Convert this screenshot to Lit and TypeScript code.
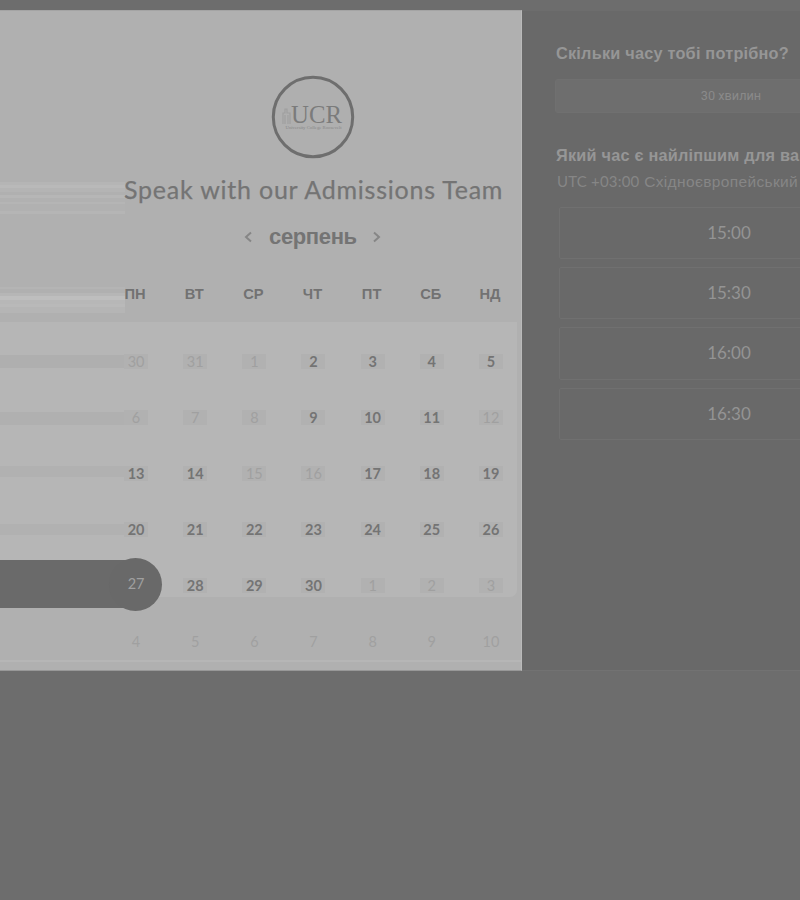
import { LitElement, html, css } from "lit";
import { customElement } from "lit/decorators.js";
import { classMap } from "lit/directives/class-map.js";

const WEEKDAYS = ["ПН", "ВТ", "СР", "ЧТ", "ПТ", "СБ", "НД"];
const TIMES = ["15:00", "15:30", "16:00", "16:30"];

type Day = { n: number; state: "off" | "open" | "selected" };
const OPEN = new Set([2, 3, 4, 5, 9, 10, 11, 13, 14, 17, 18, 19, 20, 21, 22, 23, 24, 25, 26, 28, 29, 30]);
const DAYS: Day[] = [
  { n: 30, state: "off" },
  { n: 31, state: "off" },
  ...Array.from({ length: 30 }, (_, i): Day => {
    const n = i + 1;
    return { n, state: n === 27 ? "selected" : OPEN.has(n) ? "open" : "off" };
  }),
  ...Array.from({ length: 10 }, (_, i): Day => ({ n: i + 1, state: "off" })),
];

@customElement("booking-calendar")
class BookingCalendar extends LitElement {
  static styles = css`
    :host {
      display: flex;
      flex-direction: column;
      box-sizing: border-box;
      width: 522px;
      height: 661px;
      background: #b0b0b0;
      border-top: 1px solid #a4a4a4;
      border-right: 1px solid #bababa;
      border-bottom: 1px solid #989898;
      position: relative;
      color: #747474;
      font-family: Lato, "Liberation Sans", sans-serif;
    }
    .head {
      height: 311px;
      display: flex;
      flex-direction: column;
      box-sizing: border-box;
      padding-top: 64px;
      background:
        linear-gradient(#b5b5b5 0 3px, #b9b9b9 3px 6px, #b4b4b4 6px 10px, #b0b0b0 10px 13px, #b6b6b6 13px 16px, #b1b1b1 16px 20px, #b5b5b5 20px 22px, #b1b1b1 22px 29px, #b5b5b5 29px 32px) 0 171px / 125px 32px no-repeat,
        linear-gradient(#b4b4b4 0 2px, #b0b0b0 2px 6px, #b6b6b6 6px 9px, #bebebe 9px 13px, #b7b7b7 13px 17px, #b9b9b9 17px 20px, #b5b5b5 20px 26px) 0 276px / 125px 26px no-repeat;
    }
    .logo {
      width: 84px;
      height: 84px;
      margin-left: 271px;
      display: block;
    }
    .title {
      height: 32px;
      line-height: 32px;
      margin: 14px 0 0 124px;
      font-size: 25px;
      letter-spacing: 0.77px;
      white-space: nowrap;
      -webkit-text-stroke: 0.25px #747474;
    }
    .month {
      display: flex;
      align-items: center;
      height: 28px;
      margin: 18px 0 0 244px;
      font: bold 22px/28px "Liberation Sans", Arial, sans-serif;
    }
    .month svg {
      width: 8px;
      height: 12px;
      fill: none;
      stroke: #868686;
      stroke-width: 2;
    }
    .name {
      width: 88px;
      margin: 0 16px 0 17px;
      letter-spacing: -0.35px;
    }
    .week,
    .days {
      display: grid;
      grid-template-columns: repeat(7, 59.15px);
      padding-left: 106.5px;
      text-align: center;
    }
    .week {
      margin-top: 32px;
      padding-left: 105.5px;
      font: bold 14.7px/22px "Liberation Sans", Arial, sans-serif;
      color: #727272;
    }
    .days {
      box-sizing: border-box;
      width: 517px;
      height: 275px;
      grid-auto-rows: 56px;
      padding-top: 11px;
      border-radius: 0 0 7px 0;
      background:
        linear-gradient(#afafaf, #afafaf) 0 33px / 125px 13px no-repeat,
        linear-gradient(#b0b0b0, #b0b0b0) 0 90px / 125px 13px no-repeat,
        linear-gradient(#b1b1b1, #b1b1b1) 0 144px / 125px 11px no-repeat,
        linear-gradient(#b1b1b1, #b1b1b1) 0 202px / 125px 11px no-repeat,
        #b6b6b6;
    }
    .day {
      display: flex;
      align-items: center;
      justify-content: center;
      font-size: 14.5px;
      padding-top: 1px;
      position: relative;
    }
    .num {
      position: relative;
      width: 24px;
      height: 15px;
      line-height: 15px;
      background: #b1b1b1;
    }
    .off {
      color: #a0a0a0;
    }
    .open {
      font-weight: bold;
      color: #747474;
    }
    .tail .num {
      background: none;
    }
    .selected {
      color: #a0a0a0;
    }
    .selected .num {
      background: none;
      top: -2px;
    }
    .disc {
      position: absolute;
      left: 2px;
      top: 0.5px;
      width: 53px;
      height: 53px;
      border-radius: 50%;
      background: #696969;
    }
    .bar {
      position: absolute;
      left: -106.5px;
      top: 3px;
      width: 126px;
      height: 48px;
      background: #6a6a6a;
    }
    .rule {
      height: 2px;
      margin-top: 63px;
      background: #b6b6b6;
    }
  `;

  render() {
    return html`
      <div class="head">
        <svg class="logo" viewBox="0 0 84 84">
          <circle cx="42" cy="42" r="39.7" fill="#afafaf" stroke="#6e6e6e" stroke-width="3" />
          <path d="M12 49V38h2v-4h2v4h3v11M14 40v9M17 40v9" fill="none" stroke="#9f9f9f" stroke-width="1.2" />
          <g font-family="Liberation Serif, serif" fill="#7b7b7b">
            <text x="20" y="48" font-size="26" textLength="51" lengthAdjust="spacingAndGlyphs">UCR</text>
            <text x="14.5" y="54" font-size="4.5" textLength="56" lengthAdjust="spacingAndGlyphs" fill="#888">University College Roosevelt</text>
          </g>
        </svg>
        <div class="title">Speak with our Admissions Team</div>
        <div class="month">
          <svg viewBox="0 0 8 12"><path d="M7 1.5 2 6l5 4.5" /></svg>
          <span class="name">серпень</span>
          <svg viewBox="0 0 8 12"><path d="m1 1.5 5 4.5-5 4.5" /></svg>
        </div>
        <div class="week">${WEEKDAYS.map((d) => html`<span>${d}</span>`)}</div>
      </div>
      <div class="days">
        ${DAYS.map(
          (d, i) => html`<div class=${classMap({ day: true, [d.state]: true, tail: i >= 35 })}>
            ${d.state === "selected" ? html`<span class="bar"></span><span class="disc"></span>` : ""}
            <span class="num">${d.n}</span>
          </div>`
        )}
      </div>
      <div class="rule"></div>
    `;
  }
}

@customElement("booking-times")
class BookingTimes extends LitElement {
  static styles = css`
    :host {
      display: block;
      box-sizing: border-box;
      flex: 1;
      min-width: 0;
      height: 661px;
      padding: 31px 0 0 34px;
      overflow: hidden;
      background: #696969;
      border-top: 1px solid #6d6d6d;
      border-bottom: 1px solid #727272;
      font-family: "Liberation Sans", Arial, sans-serif;
      color: #969696;
      white-space: nowrap;
    }
    .label {
      font-size: 16.3px;
      font-weight: bold;
      line-height: 22px;
      letter-spacing: 0.22px;
    }
    .duration {
      box-sizing: border-box;
      width: 350px;
      height: 34px;
      margin: 15px 0 31px -1px;
      border: 1px solid #707070;
      border-radius: 3px;
      background: #6e6e6e;
      text-align: center;
      text-indent: 2px;
      font: 12.7px/32px Roboto, sans-serif;
      color: #8a8a8a;
    }
    .zone {
      height: 20px;
      margin: 5px 0 16px 1px;
      font-size: 15.5px;
      line-height: 20px;
      letter-spacing: 0.35px;
      color: #868686;
    }
    .utc {
      font-family: Lato, sans-serif;
      font-size: 15px;
      letter-spacing: 0.2px;
    }
    .slots {
      display: grid;
      gap: 8px;
      margin-left: 3px;
      width: 340px;
    }
    .slot {
      box-sizing: border-box;
      height: 52.2px;
      border: 1px solid #707070;
      border-radius: 2px;
      text-align: center;
      font: 17px/50px Lato, sans-serif;
      color: #949494;
    }
  `;

  render() {
    return html`
      <div class="label">Скільки часу тобі потрібно?</div>
      <div class="duration">30 хвилин</div>
      <div class="label">Який час є найліпшим для ва</div>
      <div class="zone"><span class="utc">UTC +03:00</span> Східноєвропейський</div>
      <div class="slots">${TIMES.map((t) => html`<div class="slot">${t}</div>`)}</div>
    `;
  }
}

@customElement("app-root")
class AppRoot extends LitElement {
  static styles = css`
    :host {
      display: block;
      box-sizing: border-box;
      width: 800px;
      height: 900px;
      padding-top: 10px;
      overflow: hidden;
      background: #6d6d6d;
    }
    .row {
      display: flex;
    }
  `;

  render() {
    return html`<div class="row">
      <booking-calendar></booking-calendar>
      <booking-times></booking-times>
    </div>`;
  }
}
